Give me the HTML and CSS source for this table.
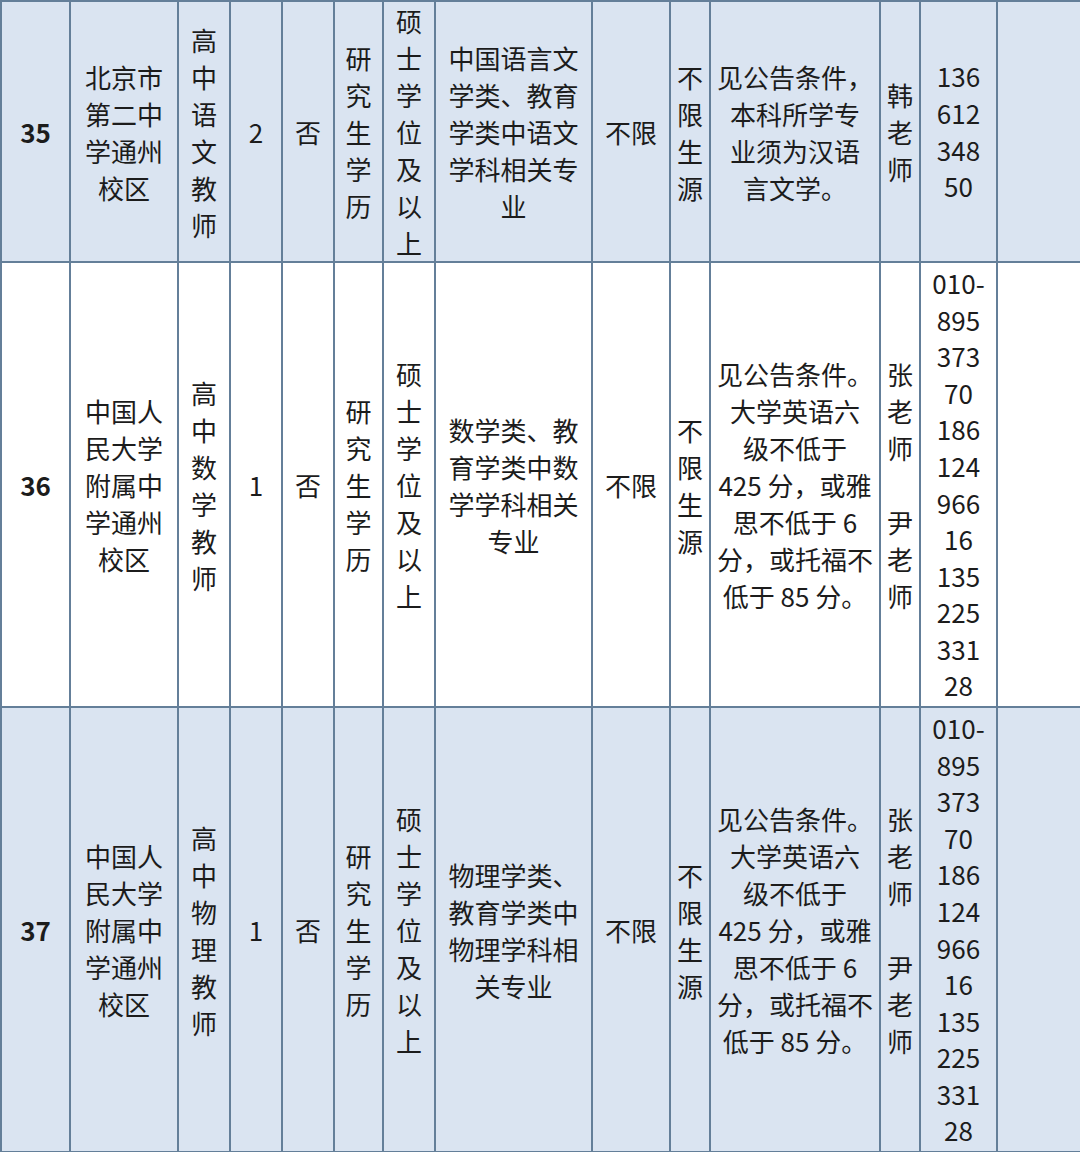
FILE: index.html
```html
<!DOCTYPE html>
<html lang="zh-CN">
<head>
<meta charset="utf-8">
<title>招聘岗位表</title>
<link rel="stylesheet" href="styles.css">
</head>
<body>
<table class="jobs">
  <colgroup>
    <col class="c-no"><col class="c-school"><col class="c-pos"><col class="c-num"><col class="c-flag">
    <col class="c-edu"><col class="c-deg"><col class="c-major"><col class="c-lim"><col class="c-src">
    <col class="c-cond"><col class="c-contact"><col class="c-phone"><col class="c-note">
  </colgroup>
  <tbody>
    <tr class="row-a r1">
      <td class="no">35</td>
      <td>北京市<br>第二中<br>学通州<br>校区</td>
      <td>高<br>中<br>语<br>文<br>教<br>师</td>
      <td>2</td>
      <td>否</td>
      <td>研<br>究<br>生<br>学<br>历</td>
      <td>硕<br>士<br>学<br>位<br>及<br>以<br>上</td>
      <td>中国语言文<br>学类、教育<br>学类中语文<br>学科相关专<br>业</td>
      <td>不限</td>
      <td>不<br>限<br>生<br>源</td>
      <td>见公告条件，<br>本科所学专<br>业须为汉语<br>言文学。</td>
      <td>韩<br>老<br>师</td>
      <td class="phone">136<br>612<br>348<br>50</td>
      <td></td>
    </tr>
    <tr class="row-b r2">
      <td class="no">36</td>
      <td>中国人<br>民大学<br>附属中<br>学通州<br>校区</td>
      <td>高<br>中<br>数<br>学<br>教<br>师</td>
      <td>1</td>
      <td>否</td>
      <td>研<br>究<br>生<br>学<br>历</td>
      <td>硕<br>士<br>学<br>位<br>及<br>以<br>上</td>
      <td>数学类、教<br>育学类中数<br>学学科相关<br>专业</td>
      <td>不限</td>
      <td>不<br>限<br>生<br>源</td>
      <td>见公告条件。<br>大学英语六<br>级不低于<br>425 分，或雅<br>思不低于 6<br>分，或托福不<br>低于 85 分。</td>
      <td>张<br>老<br>师<br><br>尹<br>老<br>师</td>
      <td class="phone">010-<br>895<br>373<br>70<br>186<br>124<br>966<br>16<br>135<br>225<br>331<br>28</td>
      <td></td>
    </tr>
    <tr class="row-a r3">
      <td class="no">37</td>
      <td>中国人<br>民大学<br>附属中<br>学通州<br>校区</td>
      <td>高<br>中<br>物<br>理<br>教<br>师</td>
      <td>1</td>
      <td>否</td>
      <td>研<br>究<br>生<br>学<br>历</td>
      <td>硕<br>士<br>学<br>位<br>及<br>以<br>上</td>
      <td>物理学类、<br>教育学类中<br>物理学科相<br>关专业</td>
      <td>不限</td>
      <td>不<br>限<br>生<br>源</td>
      <td>见公告条件。<br>大学英语六<br>级不低于<br>425 分，或雅<br>思不低于 6<br>分，或托福不<br>低于 85 分。</td>
      <td>张<br>老<br>师<br><br>尹<br>老<br>师</td>
      <td class="phone">010-<br>895<br>373<br>70<br>186<br>124<br>966<br>16<br>135<br>225<br>331<br>28</td>
      <td></td>
    </tr>
  </tbody>
</table>
</body>
</html>
```

FILE: styles.css
```css
html, body {
  margin: 0;
  padding: 0;
  background: #dae4f1;
}
body {
  width: 1080px;
  height: 1152px;
  overflow: hidden;
  font-family: "Noto Sans CJK SC", "Noto Sans", sans-serif;
  color: #1c1c1c;
}
.jobs {
  table-layout: fixed;
  border-collapse: collapse;
  width: 1100px;
  margin: 0;
}
.c-no { width: 69px; }
.c-school { width: 108px; }
.c-pos { width: 52px; }
.c-num { width: 52px; }
.c-flag { width: 52px; }
.c-edu { width: 49px; }
.c-deg { width: 52px; }
.c-major { width: 157px; }
.c-lim { width: 78px; }
.c-src { width: 40px; }
.c-cond { width: 170px; }
.c-contact { width: 40px; }
.c-phone { width: 77px; }
.c-note { width: 104px; }

.jobs td {
  border: 2px solid #647f99;
  padding: 0;
  text-align: center;
  vertical-align: middle;
  font-size: 26px;
  line-height: 37px;
  white-space: nowrap;
  overflow: hidden;
}
.jobs td.phone {
  line-height: 36.6px;
}
.row-a td { background: #dae4f1; }
.row-b td { background: #ffffff; }
.r1 td { height: 258px; }
.r2 td { height: 443px; }
.r3 td { height: 443px; }
.jobs td.no {
  font-weight: 700;
}
```
